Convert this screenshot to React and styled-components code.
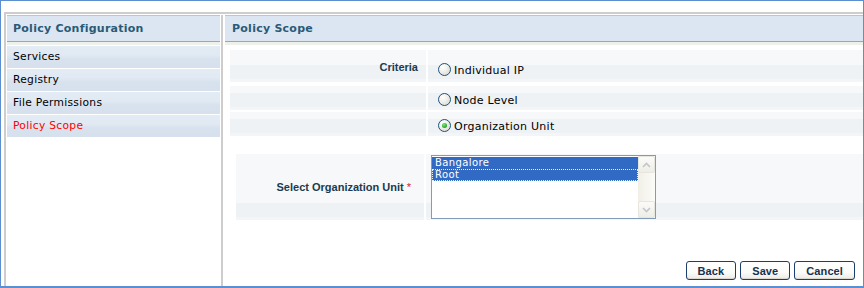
import React from "react";
import styled, { createGlobalStyle, css } from "styled-components";

const GlobalStyle = createGlobalStyle`
  body {
    margin: 0;
    font-family: "DejaVu Sans", Verdana, sans-serif;
    background: #fff;
  }
`;

const menu = [
  { id: "services", label: "Services" },
  { id: "registry", label: "Registry" },
  { id: "files", label: "File Permissions" },
  { id: "scope", label: "Policy Scope", active: true },
];

const criteria = [
  { id: "ip", label: "Individual IP", height: 32, gap: 0, top: 13, title: "Criteria" },
  { id: "node", label: "Node Level", height: 24, gap: 4, top: 7 },
  { id: "org", label: "Organization Unit", height: 24, gap: 2, top: 7, checked: true },
];

const units = ["Bangalore", "Root"];

const ChevronUp = () => (
  <svg width="9" height="6" viewBox="0 0 9 6">
    <path d="M1 5 L4.5 1.5 L8 5" fill="none" stroke="#c2c6cc" strokeWidth="1.6" />
  </svg>
);

const ChevronDown = () => (
  <svg width="9" height="6" viewBox="0 0 9 6">
    <path d="M1 1 L4.5 4.5 L8 1" fill="none" stroke="#c2c6cc" strokeWidth="1.6" />
  </svg>
);

const App = () => {
  return (
    <>
      <GlobalStyle />
      <Frame>
        <Panel>
          <Sidebar>
            <Header>Policy Configuration</Header>
            <Menu>
              {menu.map((item) => (
                <MenuItem key={item.id} $active={item.active}>
                  {item.label}
                </MenuItem>
              ))}
            </Menu>
          </Sidebar>

          <Content>
            <Header $indent={7}>Policy Scope</Header>

            <Table>
              {criteria.map((row) => (
                <Row key={row.id} $height={row.height} $gap={row.gap}>
                  <LabelCell $width={196} $pad={8}>
                    {row.title && <Label $top={10}>{row.title}</Label>}
                  </LabelCell>
                  <ValueCell $top={row.top}>
                    <Choice>
                      <Radio $checked={row.checked} />
                      <ChoiceText>{row.label}</ChoiceText>
                    </Choice>
                  </ValueCell>
                </Row>
              ))}
            </Table>

            <Table $indent={11} $top={18}>
              <Row $height={66}>
                <LabelCell $width={188} $pad={13} $center>
                  <Label>
                    Select Organization Unit <Required>*</Required>
                  </Label>
                </LabelCell>
                <ValueCell $top={1}>
                  <ListBox>
                    <Options>
                      {units.map((u, i) => (
                        <Option key={u} $focused={i === units.length - 1}>
                          {u}
                        </Option>
                      ))}
                    </Options>
                    <ScrollBar>
                      <ScrollButton>
                        <ChevronUp />
                      </ScrollButton>
                      <ScrollButton>
                        <ChevronDown />
                      </ScrollButton>
                    </ScrollBar>
                  </ListBox>
                </ValueCell>
              </Row>
            </Table>

            <Actions>
              <Button>Back</Button>
              <Button>Save</Button>
              <Button>Cancel</Button>
            </Actions>
          </Content>
        </Panel>
      </Frame>
    </>
  );
};

export default App;

const Frame = styled.div`
  width: 864px;
  height: 288px;
  box-sizing: border-box;
  border: 1px solid #5b8fd2;
  border-bottom-width: 2px;
  padding: 11px 0 0 3px;
  display: flex;
  background: #fff;
`;

const Panel = styled.div`
  flex: 1;
  display: flex;
  border-top: 2px solid #cdcdcd;
  border-left: 2px solid #cdcdcd;
  padding: 1px 0 0 1px;
`;

const Sidebar = styled.div`
  width: 213px;
  padding-right: 1px;
  border-right: 2px solid #cdcdcd;
`;

const Header = styled.div`
  height: 25px;
  line-height: 25px;
  border-top: 1px solid #b5c6da;
  border-bottom: 1px solid #93a8c4;
  background: #dbe6f2;
  box-shadow: 0 3px 0 #eef1ea;
  padding-left: ${(p) => p.$indent || 6}px;
  color: #2a5a77;
  font-size: 11px;
  font-weight: bold;
  letter-spacing: 0.25px;
`;

const Menu = styled.div`
  margin-top: 4px;
  display: flex;
  flex-direction: column;
  gap: 1px;
`;

const MenuItem = styled.div`
  height: 22px;
  line-height: 22px;
  padding-left: 6px;
  font-size: 10.7px;
  letter-spacing: 0.3px;
  color: ${(p) => (p.$active ? "#f00" : "#000")};
  background: linear-gradient(#e3ebf4 0, #e1eaf3 40%, #d7e2ee 60%, #d6e1ed 100%);
  cursor: pointer;
`;

const Content = styled.div`
  flex: 1;
  padding-left: 2px;
  display: flex;
  flex-direction: column;
`;

const Table = styled.div`
  margin-top: ${(p) => (p.$top !== undefined ? p.$top : 8)}px;
  padding-left: ${(p) => p.$indent || 5}px;
  display: flex;
  flex-direction: column;
`;

const Row = styled.div`
  display: flex;
  gap: 2px;
  height: ${(p) => p.$height}px;
  margin-top: ${(p) => p.$gap || 0}px;
`;

const cellBg = css`
  background: linear-gradient(to top, #f3f6f8 0, #f3f6f8 3px, #eef2f5 3px, #eef2f5 17px, #f6f8fa 17px);
`;

const LabelCell = styled.div`
  ${cellBg}
  width: ${(p) => p.$width}px;
  box-sizing: border-box;
  padding-right: ${(p) => p.$pad}px;
  display: flex;
  justify-content: flex-end;
  align-items: ${(p) => (p.$center ? "center" : "flex-start")};
`;

const Label = styled.span`
  margin-top: ${(p) => p.$top || 0}px;
  font-family: "Liberation Sans", Arial, sans-serif;
  font-size: 11px;
  line-height: 14px;
  font-weight: bold;
  color: #1a3b4f;
  white-space: nowrap;
`;

const Required = styled.span`
  color: #e02020;
  font-weight: normal;
`;

const ValueCell = styled.div`
  ${cellBg}
  flex: 1;
  padding-top: ${(p) => p.$top}px;
  box-sizing: border-box;
`;

const Choice = styled.label`
  display: flex;
  align-items: center;
  gap: 3px;
  margin-left: 10px;
  height: 13px;
`;

const Radio = styled.span`
  position: relative;
  flex: none;
  width: 13px;
  height: 13px;
  box-sizing: border-box;
  border-radius: 50%;
  border: 1px solid #1c5180;
  background: radial-gradient(circle at 35% 30%, #ffffff 0, #f3f3ef 35%, #d4d4cc 100%);

  ${(p) =>
    p.$checked &&
    css`
      &::after {
        content: "";
        position: absolute;
        left: 3px;
        top: 3px;
        width: 5px;
        height: 5px;
        border-radius: 50%;
        background: radial-gradient(circle at 40% 35%, #8fe28f 0, #2fb12f 55%, #1d8f1d 100%);
      }
    `}
`;

const ChoiceText = styled.span`
  font-size: 11px;
  line-height: 13px;
  letter-spacing: 0.25px;
  color: #000;
  white-space: nowrap;
  margin-top: 2px;
`;

const ListBox = styled.div`
  width: 225px;
  height: 64px;
  margin-left: 5px;
  box-sizing: border-box;
  border: 1px solid #7f9db9;
  background: #fff;
  display: flex;
`;

const Options = styled.div`
  flex: 1;
  padding-top: 1px;
`;

const Option = styled.div`
  height: 12px;
  line-height: 12px;
  padding-left: 3px;
  font-size: 10px;
  letter-spacing: 0.4px;
  color: #fff;
  background: #316ac5;
  ${(p) =>
    p.$focused &&
    css`
      outline: 1px dotted #e8eef8;
      outline-offset: -1px;
    `}
`;

const ScrollBar = styled.div`
  width: 17px;
  display: flex;
  flex-direction: column;
  justify-content: space-between;
  background: linear-gradient(to right, #f1efe6, #fbfbf8);
`;

const ScrollButton = styled.div`
  height: 17px;
  box-sizing: border-box;
  border: 1px solid #e6e6de;
  border-radius: 2px;
  background: linear-gradient(#fbfbf9, #eeede6);
  display: flex;
  align-items: center;
  justify-content: center;
`;

const Actions = styled.div`
  margin-top: auto;
  display: flex;
  justify-content: flex-end;
  gap: 4px;
  padding: 0 8px 6px 0;
`;

const Button = styled.button`
  height: 19px;
  padding: 0 11px;
  border: 1px solid #1f3c6e;
  border-radius: 3px;
  background: linear-gradient(#ffffff 0, #fbfbf9 60%, #ecebe6 100%);
  box-shadow: inset 0 -1px 0 #d8d6ce;
  font-family: "Liberation Sans", Arial, sans-serif;
  font-size: 11px;
  font-weight: bold;
  letter-spacing: 0.1px;
  color: #17304f;
  cursor: pointer;
`;
